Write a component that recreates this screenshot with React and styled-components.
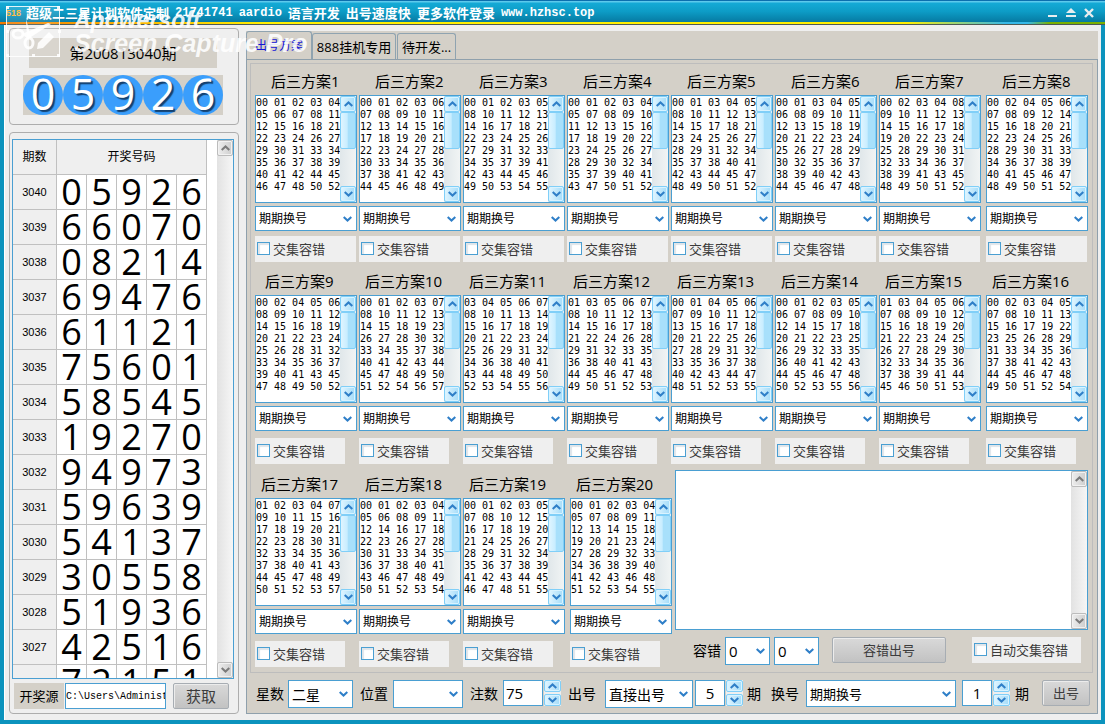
import React, {useState} from 'react';
import styled, { createGlobalStyle } from 'styled-components';

const GlobalStyle = createGlobalStyle`

    *{
        box-sizing:border-box;
    }
    body{
        margin:0;
        font-family:"Open Sans", "Noto Sans CJK SC", sans-serif;
        font-size:13px;
        color:#000;
        background:#efefef;
    }
    button, input, select, textarea{
        font-family:inherit;
        color:inherit;
        margin:0;
        padding:0;
        border-radius:0;
        outline:none;
    }
`;

const BLUE = "#4a9fd2";
const PANEL = "#d4d0c8";
const FACE = "#efefef";

//Whole window, the title bar sits on top of the framed body.
const Window = styled.div`

    position:relative;
    min-height:100vh;
    display:flex;
    flex-direction:column;
`;

const TitleBar = styled.header`

    display:flex;
    align-items:center;
    height:22px;
    padding:2px 10px 0 6px;
    color:white;
    border-top:1px solid #0b6fae;
    background:linear-gradient(#5cc9ec 0, #5cc9ec 1px, #14aad6 2px, #0d9cc6 50%, #067aa2 100%);
`;

const AppBadge = styled.span`

    width:20px;
    font:bold 9px "Liberation Sans", sans-serif;
    color:#ffb42e;
`;

const TitleText = styled.h1`

    flex:1;
    display:flex;
    gap:6px;
    margin:0;
    font-size:13px;
    line-height:18px;
    font-weight:bold;
    white-space:nowrap;
`;

const Latin = styled.span`

    font-family:"Liberation Mono", monospace;
    font-size:12px;
`;

const WindowButtons = styled.div`

    display:flex;
    gap:6px;
`;

const WindowButton = styled.button`

    display:flex;
    width:12px;
    height:12px;
    border:0;
    background:none;
`;

const Stripe = styled.div`

    height:3px;
    border-bottom:1px solid #4d5a55;
    background:linear-gradient(90deg, #f07800 0, #f8a000 8%, #ffee00 24%, #ffee00 82%, #35b8e8 91%, #35b8e8 93%, #7ab000 95%, #7ab000 100%);
`;

const Body = styled.main`

    flex:1;
    display:flex;
    gap:7px;
    padding:3px 3px 6px 5px;
    border:solid #0c93bd;
    border-width:0 4px 4px;
    box-shadow:inset 1px 0 0 #fff;
    background:${FACE};
`;

const Side = styled.aside`

    flex:0 0 230px;
    display:flex;
    flex-direction:column;
    gap:7px;
`;

const Group = styled.section`

    display:flex;
    flex-direction:column;
    border:1px solid #adadad;
    border-radius:4px;
`;

const LatestGroup = styled(Group)`

    align-items:center;
    gap:7px;
    padding:9px 2px 9px 0;
`;

const Issue = styled.div`

    width:188px;
    height:30px;
    line-height:30px;
    font-size:15px;
    text-align:center;
    background:${PANEL};
`;

const Balls = styled.div`

    display:flex;
    background:${PANEL};
`;

const Ball = styled.span`

    width:40px;
    height:40px;
    border-radius:50%;
    line-height:38px;
    font-size:43px;
    text-align:center;
    color:white;
    text-shadow:2px 2px 1px #14406e;
    background:#3a9efc;
`;

const HistoryGroup = styled(Group)`

    flex:1;
    gap:4px;
    padding:6px 4px 4px 2px;
`;

const HistoryBox = styled.div`

    flex:1 1 0;
    min-height:0;
    display:flex;
    justify-content:space-between;
    overflow:hidden;
    border:1px solid ${BLUE};
    background:white;
`;

const HistoryTable = styled.table`

    table-layout:fixed;
    width:194px;
    height:0;
    border-collapse:separate;
    border-spacing:0;

    th, td{
        height:35px;
        padding:0;
        text-align:center;
        font-weight:normal;
        border-right:1px solid #c0c0c0;
        border-bottom:1px solid #c0c0c0;
    }
    th{
        font-size:12px;
        line-height:16px;
        background:${FACE};
    }
    tbody th{
        font-family:"Liberation Sans", sans-serif;
        font-size:11px;
    }
    td{
        font-size:36px;
        line-height:34px;
    }
`;

const SourceRow = styled.div`

    display:flex;
    padding-left:2px;
`;

const SourceLabel = styled.label`

    width:50px;
    height:26px;
    margin-right:1px;
    line-height:26px;
    text-align:center;
    background:${PANEL};
`;

const TextInput = styled.input`

    width:${props => props.$width}px;
    height:26px;
    padding:0 ${props => props.$center ? 0 : 2}px;
    font-size:15px;
    text-align:${props => props.$center ? "center" : "left"};
    border:1px solid ${BLUE};
    background:white;
`;

const PathInput = styled(TextInput)`

    padding:0;
    font-family:"Liberation Mono", monospace;
    font-size:10px;
`;

const PushButton = styled.button`

    width:${props => props.$width}px;
    height:26px;
    margin-left:${props => props.$before}px;
    font-size:${props => props.$large ? 15 : 13}px;
    line-height:20px;
    color:#3c3c3c;
    border:1px solid #a7adb3;
    border-radius:2px;
    box-shadow:inset 1px 1px 0 #ececec;
    background:linear-gradient(#d9d9d9, #c2c2c2);
`;

//Right side, tab strip plus the page below it.
const Content = styled.section`

    flex:1;
    min-width:0;
    display:flex;
    flex-direction:column;
    margin-top:3px;
    background:${PANEL};
`;

const Tabs = styled.nav`

    display:flex;
    align-items:flex-end;
    height:28px;
`;

const Tab = styled.button`

    height:${props => props.$active ? 28 : 26}px;
    width:${props => props.$width}px;
    margin-right:${props => props.$active ? 0 : 1}px;
    font-size:${props => props.$active ? 12 : 13}px;
    line-height:20px;
    white-space:nowrap;
    color:${props => props.$active ? "#1414d8" : "#000"};
    border:1px solid #8fa3b0;
    border-bottom:0;
    border-radius:3px 3px 0 0;
    background:${PANEL};
`;

const Page = styled.div`

    flex:1;
    padding:3px 4px 5px 3px;
    border:1px solid #8fa0ac;
`;

const PlanFrame = styled.div`

    padding:7px 4px 5px;
    border:1px solid #bdbdbd;
`;

//The last column keeps a slightly wider gutter on its left.
const PlanGrid = styled.div`

    display:grid;
    grid-template-columns:repeat(${props => props.$columns - 1}, 104fr) 105fr;
    margin-bottom:${props => props.$after || 0}px;
`;

const PlanCell = styled.article`

    min-width:0;
    display:flex;
    flex-direction:column;
    padding-right:2px;

    &:last-child{
        padding:0 0 0 3px;
    }
`;

const PlanTitle = styled.h2`

    height:24px;
    margin:0;
    padding-left:${props => props.$indent}px;
    font-size:15px;
    line-height:20px;
    font-weight:normal;
    white-space:nowrap;
`;

const ListBox = styled.div`

    display:flex;
    height:${props => props.$height}px;
    border:1px solid ${BLUE};
    background:white;
`;

const NumberText = styled.textarea`

    flex:1;
    min-width:0;
    padding-top:1px;
    border:0;
    resize:none;
    overflow:hidden;
    white-space:pre;
    font-family:"DejaVu Sans Mono", monospace;
    font-size:10px;
    line-height:12px;
    background:white;
`;

const Bar = styled.div`

    flex:0 0 16px;
    display:flex;
    flex-direction:column;
    background:${props => props.$gray
        ? "linear-gradient(90deg, #e2e2e2, #f6f6f6)"
        : "linear-gradient(90deg, #e0e7ea, #f1f4f4)"};
`;

const BarButton = styled.button`

    flex:0 0 ${props => props.$height || 16}px;
    display:flex;
    align-items:center;
    justify-content:center;
    color:${props => props.$gray ? "#7b7b7b" : "#2f7fc8"};
    border:1px solid ${props => props.$gray ? "#bcbcbc" : "#80cff8"};
    border-radius:2px;
    box-shadow:inset 0 0 0 1px ${props => props.$gray ? "#f2f2f2" : "#d9f3ff"};
    background:${props => props.$gray
        ? "linear-gradient(90deg, #ededed, #cecece)"
        : "linear-gradient(90deg, #e0f5ff, #a4dcf9)"};
`;

const Thumb = styled.div`

    height:37px;
    border:1px solid #80cff8;
    border-radius:2px;
    background:linear-gradient(90deg, #e0f5ff 0, #c8edff 45%, #a8e0fb 50%, #a8e0fb 100%);
`;

const Track = styled.div`

    flex:1;
`;

const SelectBox = styled.span`

    flex:${props => props.$grow ? "1 1 150px" : "none"};
    display:grid;
    align-items:center;
    width:${props => props.$width ? props.$width + "px" : "auto"};
    height:${props => props.$height}px;
    margin-top:${props => props.$above || 0}px;
    margin-left:${props => props.$before || 0}px;
    border:1px solid ${BLUE};
    color:#2f7fc8;
    background:white;

    > *{
        grid-area:1 / 1;
    }
    > svg{
        justify-self:end;
        margin-right:4px;
        pointer-events:none;
    }
`;

const Select = styled.select`

    appearance:none;
    width:100%;
    height:100%;
    padding-left:3px;
    border:0;
    color:black;
    font-size:${props => props.$size}px;
    background:none;
`;

const CheckLabel = styled.label`

    display:flex;
    align-items:center;
    gap:3px;
    height:26px;
    width:${props => props.$width}px;
    margin-top:${props => props.$above || 0}px;
    margin-left:${props => props.$before || 0}px;
    padding:0 0 2px 2px;
    white-space:nowrap;
    color:#3a3a3a;
    background:${FACE};
`;

const CheckInput = styled.input`

    appearance:none;
    width:13px;
    height:13px;
    border:1px solid ${BLUE};
    box-shadow:inset 2px 2px 1px #dfe5ea;
    background:${props => props.checked ? BLUE : "white"};
`;

const Lower = styled.div`

    display:grid;
    grid-template-columns:417fr 413fr;
    gap:3px;

    > :first-child{
        padding-top:4px;
    }
`;

const OutputControls = styled.div`

    display:flex;
    margin-top:7px;
    padding-left:18px;
`;

const BottomBar = styled.div`

    display:flex;
    padding:7px 3px 0 6px;
`;

const FieldLabel = styled.label`

    flex:none;
    height:28px;
    margin-left:${props => props.$before || 0}px;
    margin-right:${props => props.$after || 5}px;
    font-size:14px;
    line-height:27px;
`;

const Gap = styled.span`

    flex:0 0 ${props => props.$size}px;
`;

const Stepper = styled.span`

    flex:none;
    display:flex;
    flex-direction:column;
    gap:2px;
    width:17px;
    height:26px;
    margin-left:1px;
    background:${FACE};
`;

//Lies over the corner of the window.
const Watermark = styled.div`

    position:absolute;
    top:6px;
    left:6px;
    display:flex;
    gap:12px;
    color:rgba(255,255,255,0.88);
    font-family:"Liberation Sans", sans-serif;
    font-weight:bold;
    font-style:italic;
    white-space:nowrap;
    pointer-events:none;
`;

const WatermarkText = styled.div`

    font-size:${props => props.$size}px;
    line-height:${props => props.$line}px;
`;

const Chevron = ({up}) => (
    <svg width="9" height="6" viewBox="0 0 9 6" fill="none" stroke="currentColor" strokeWidth="2">
        <path d={up ? "M0.7 5 L4.5 1.4 L8.3 5" : "M0.7 1 L4.5 4.6 L8.3 1"}/>
    </svg>
);

function ScrollBar({gray, thumb}){

    return (<Bar $gray={gray}>
        <BarButton $gray={gray} aria-label="向上"><Chevron up/></BarButton>
        {thumb && <Thumb/>}
        <Track/>
        <BarButton $gray={gray} aria-label="向下"><Chevron/></BarButton>
    </Bar>);
}

function DropDown({id, label, options, size = 14, height = 28, ...rest}){

    return (<SelectBox $height={height} {...rest}>
        <Select id={id} aria-label={label} $size={size}>
            {options.map(option => <option key={option}>{option}</option>)}
        </Select>
        <Chevron/>
    </SelectBox>);
}

function Check({children, ...rest}){

    const [checked, setChecked] = useState(false);

    return (<CheckLabel {...rest}>
        <CheckInput type="checkbox" checked={checked} onChange={() => setChecked(!checked)}/>
        {children}
    </CheckLabel>);
}

function NumberField({id, label, start, width, center}){

    const [value, setValue] = useState(start);

    return (<>
        <TextInput id={id} aria-label={label} $width={width} $center={center} value={value}
            onChange={e => setValue(Number(e.target.value) || 0)}/>
        <Stepper>
            <BarButton $height={12} aria-label="加" onClick={() => setValue(value + 1)}><Chevron up/></BarButton>
            <BarButton $height={12} aria-label="减" onClick={() => setValue(value - 1)}><Chevron/></BarButton>
        </Stepper>
    </>);
}

function Plan({number, rows, indent, checkGap, checkWidth}){

    const name = "后三方案" + number;

    return (<PlanCell>
        <PlanTitle $indent={number === 9 ? 10 : indent}>{name}</PlanTitle>
        <ListBox $height={108}>
            <NumberText aria-label={name} defaultValue={rows.join("\n")}/>
            <ScrollBar thumb/>
        </ListBox>
        <DropDown label={name + "换号"} options={["期期换号"]} size={12} height={25} $above={3}/>
        <Check $above={checkGap} $width={checkWidth}>交集容错</Check>
    </PlanCell>);
}

const history = [
    ["3040", "05926"], ["3039", "66070"], ["3038", "08214"], ["3037", "69476"],
    ["3036", "61121"], ["3035", "75601"], ["3034", "58545"], ["3033", "19270"],
    ["3032", "94973"], ["3031", "59639"], ["3030", "54137"], ["3029", "30558"],
    ["3028", "51936"], ["3027", "42516"], ["3026", "72151"],
];

const plans = [
    ["00 01 02 03 04", "05 06 07 08 11", "12 15 16 18 21", "22 23 24 26 27", "29 30 31 33 34", "35 36 37 38 39", "40 41 42 44 45", "46 47 48 50 52"],
    ["00 01 02 03 06", "07 08 09 10 11", "12 13 14 15 16", "17 18 19 20 21", "22 23 24 27 28", "30 33 34 35 36", "37 38 41 42 43", "44 45 46 48 49"],
    ["00 01 02 03 05", "08 10 11 12 13", "14 16 17 18 21", "22 23 24 25 26", "27 29 31 32 33", "34 35 37 39 41", "42 43 44 45 46", "49 50 53 54 55"],
    ["00 01 02 03 04", "05 07 08 09 10", "11 12 13 15 16", "17 18 19 20 22", "23 24 25 26 27", "28 29 30 32 34", "35 37 39 40 41", "43 47 50 51 52"],
    ["00 01 03 04 05", "08 10 11 12 13", "14 15 17 18 21", "23 24 25 26 27", "28 29 31 32 34", "35 37 38 40 41", "42 43 44 45 47", "48 49 50 51 52"],
    ["00 01 03 04 05", "06 08 09 10 11", "12 13 15 18 19", "20 21 22 23 24", "25 26 27 28 29", "30 32 35 36 37", "38 39 40 42 43", "44 45 46 47 48"],
    ["00 02 03 04 08", "09 10 11 12 13", "14 15 16 17 18", "19 20 22 23 24", "25 28 29 30 31", "32 33 34 36 37", "38 39 41 43 45", "48 49 50 51 52"],
    ["00 02 04 05 06", "07 08 09 12 14", "15 16 18 20 21", "22 23 24 25 26", "28 29 30 31 33", "34 36 37 38 39", "40 41 45 46 47", "48 49 50 51 52"],
    ["00 02 04 05 06", "08 09 10 11 12", "14 15 16 18 19", "20 21 22 23 24", "25 26 28 31 32", "33 34 35 36 37", "39 40 41 43 45", "47 48 49 50 52"],
    ["00 01 02 03 07", "08 10 11 12 13", "14 15 18 19 23", "26 27 28 30 32", "33 34 35 37 38", "40 41 42 43 44", "45 47 48 49 50", "51 52 54 56 57"],
    ["03 04 05 06 07", "08 10 11 13 14", "15 16 17 18 19", "20 21 22 23 24", "25 26 29 31 32", "34 36 38 40 41", "43 44 48 49 50", "52 53 54 55 56"],
    ["01 03 05 06 07", "08 10 11 12 13", "14 15 16 17 18", "21 22 24 26 28", "29 31 32 33 35", "36 38 40 41 43", "44 45 46 47 48", "49 50 51 52 53"],
    ["00 01 04 05 06", "07 09 10 11 12", "13 15 16 17 18", "20 21 22 25 26", "27 28 29 31 32", "33 35 36 37 38", "40 42 43 44 47", "48 51 52 53 55"],
    ["00 01 02 03 05", "06 07 08 09 10", "12 14 15 17 18", "20 21 22 23 25", "26 29 32 33 35", "36 40 41 42 43", "44 45 46 47 48", "50 52 53 55 56"],
    ["01 03 04 05 06", "07 08 09 10 12", "15 16 18 19 20", "21 22 23 24 25", "26 27 28 29 30", "32 33 34 35 36", "37 38 39 41 44", "45 46 50 51 53"],
    ["00 02 03 04 05", "07 08 10 11 13", "15 16 17 19 22", "23 25 26 28 29", "31 33 34 35 36", "37 38 41 42 43", "44 45 46 47 48", "49 50 51 52 54"],
    ["01 02 03 04 07", "09 10 11 15 16", "17 18 19 20 21", "22 23 28 30 31", "32 33 34 35 36", "37 38 40 41 43", "44 45 47 48 49", "50 51 52 53 57"],
    ["00 01 02 03 04", "05 06 08 09 11", "12 14 16 17 18", "22 23 26 27 28", "30 31 33 34 35", "36 37 38 40 41", "43 46 47 48 49", "50 51 52 53 54"],
    ["00 01 02 03 05", "07 08 10 12 15", "16 17 18 19 20", "21 24 25 26 27", "28 29 31 32 34", "35 36 37 38 39", "41 42 43 44 45", "46 47 48 51 55"],
    ["00 01 02 03 04", "05 07 08 09 11", "12 13 14 15 18", "19 20 21 23 24", "27 28 29 32 33", "34 36 38 39 40", "41 42 43 46 48", "51 52 53 54 55"],
];

//from is zero based, the plan numbers on screen start at 1
function renderPlans(from, to, look){

    return plans.slice(from, to).map((rows, i) =>
        <Plan key={from + i} number={from + i + 1} rows={rows} {...look}/>);
}

const wide = {indent: 16, checkGap: 5, checkWidth: 101};
const narrow = {indent: 6, checkGap: 7, checkWidth: 90};

function LatestDraw(){

    return (<LatestGroup>
        <Issue>第200813040期</Issue>
        <Balls>
            {"05926".split("").map((digit, i) => <Ball key={i}>{digit}</Ball>)}
        </Balls>
    </LatestGroup>);
}

function History(){

    return (<HistoryGroup>
        <HistoryBox>
            <HistoryTable>
                <colgroup>
                    <col width="44"/>
                    <col span="5" width="30"/>
                </colgroup>
                <thead>
                    <tr><th>期数</th><th colSpan="5">开奖号码</th></tr>
                </thead>
                <tbody>
                    {history.map(([issue, digits]) => <tr key={issue}>
                        <th>{issue}</th>
                        {digits.split("").map((digit, i) => <td key={i}>{digit}</td>)}
                    </tr>)}
                </tbody>
            </HistoryTable>
            <ScrollBar gray/>
        </HistoryBox>
        <SourceRow>
            <SourceLabel htmlFor="source">开奖源</SourceLabel>
            <PathInput id="source" $width={101} defaultValue="C:\Users\Administrator"/>
            <PushButton $width={56} $before={7} $large>获取</PushButton>
        </SourceRow>
    </HistoryGroup>);
}

export default function App(){

    return (<>
        <GlobalStyle/>
        <Window>
            <TitleBar>
                <AppBadge>518</AppBadge>
                <TitleText>
                    <span>超级二三星计划软件定制</span>
                    <Latin>21741741</Latin>
                    <Latin>aardio</Latin>
                    <span>语言开发</span>
                    <span>出号速度快</span>
                    <span>更多软件登录</span>
                    <Latin>www.hzhsc.top</Latin>
                </TitleText>
                <WindowButtons>
                    <WindowButton aria-label="最小化">
                        <svg width="12" height="12" fill="#e8eef0"><rect x="1" y="8" width="9" height="2"/></svg>
                    </WindowButton>
                    <WindowButton aria-label="最大化">
                        <svg width="12" height="12" fill="#e8eef0"><path d="M6 1 L11 6 H1 Z"/><rect x="1" y="8" width="10" height="2"/></svg>
                    </WindowButton>
                    <WindowButton aria-label="关闭">
                        <svg width="12" height="12" stroke="#e8eef0" strokeWidth="2.4"><path d="M2 2 L10 10 M10 2 L2 10"/></svg>
                    </WindowButton>
                </WindowButtons>
            </TitleBar>
            <Stripe/>

            <Body>
                <Side>
                    <LatestDraw/>
                    <History/>
                </Side>

                <Content>
                    <Tabs>
                        <Tab $active $width={66}>出号方案</Tab>
                        <Tab $width={84}>888挂机专用</Tab>
                        <Tab $width={59}>待开发...</Tab>
                    </Tabs>
                    <Page>
                        <PlanFrame>
                            <PlanGrid $columns={8} $after={9}>{renderPlans(0, 8, wide)}</PlanGrid>
                            <PlanGrid $columns={8} $after={6}>{renderPlans(8, 16, narrow)}</PlanGrid>
                            <Lower>
                                <PlanGrid $columns={4}>{renderPlans(16, 20, narrow)}</PlanGrid>
                                <div>
                                    <ListBox $height={160}>
                                        <NumberText aria-label="容错结果"/>
                                        <ScrollBar gray/>
                                    </ListBox>
                                    <OutputControls>
                                        <FieldLabel htmlFor="fault-min" $after={4}>容错</FieldLabel>
                                        <DropDown id="fault-min" options={["0"]} size={15} $width={45}/>
                                        <DropDown label="容错上限" options={["0"]} size={15} $width={45} $before={4}/>
                                        <PushButton $width={114} $before={13}>容错出号</PushButton>
                                        <Check $width={109} $before={26}>自动交集容错</Check>
                                    </OutputControls>
                                </div>
                            </Lower>
                        </PlanFrame>

                        <BottomBar>
                            <FieldLabel htmlFor="stars" $after={4}>星数</FieldLabel>
                            <DropDown id="stars" options={["二星"]} $width={65}/>
                            <FieldLabel htmlFor="place" $before={7}>位置</FieldLabel>
                            <DropDown id="place" options={[""]} $width={70}/>
                            <FieldLabel htmlFor="bets" $before={7}>注数</FieldLabel>
                            <NumberField id="bets" start={75} width={40}/>
                            <FieldLabel htmlFor="mode" $before={7} $after={9}>出号</FieldLabel>
                            <DropDown id="mode" options={["直接出号"]} $width={88}/>
                            <Gap $size={2}/>
                            <NumberField label="出号期数" start={5} width={30} center/>
                            <FieldLabel as="span" $before={4}>期</FieldLabel>
                            <FieldLabel htmlFor="change" $before={5} $after={7}>换号</FieldLabel>
                            <DropDown id="change" options={["期期换号"]} size={13} height={27} $grow/>
                            <Gap $size={6}/>
                            <NumberField label="换号期数" start={1} width={30} center/>
                            <FieldLabel as="span" $before={5}>期</FieldLabel>
                            <PushButton $width={48} $before={8}>出号</PushButton>
                        </BottomBar>
                    </Page>
                </Content>
            </Body>

            <Watermark>
                <svg width="56" height="52" viewBox="0 0 56 52" fill="none" stroke="currentColor">
                    <rect x="0.5" y="0.5" width="53" height="50" fill="rgba(255,255,255,0.12)"/>
                    <g fill="currentColor" stroke="none">
                        <rect x="0" y="0" width="3" height="3"/><rect x="26" y="0" width="3" height="3"/><rect x="51" y="0" width="3" height="3"/>
                        <rect x="0" y="24" width="3" height="3"/><rect x="52" y="24" width="3" height="3"/>
                        <rect x="0" y="48" width="3" height="3"/><rect x="26" y="48" width="3" height="3"/><rect x="51" y="48" width="3" height="3"/>
                        <path d="M32 37 L43 26 L48 31 L37 42 L31 43 Z"/>
                        <path d="M20 13 L25 31 L21 33 Z"/>
                        <path d="M16 28 L42 17 L45 18 L22 33 Z"/>
                    </g>
                    <ellipse cx="12" cy="28" rx="5" ry="4" strokeWidth="3"/>
                    <ellipse cx="23" cy="37" rx="4" ry="5" strokeWidth="3"/>
                </svg>
                <div>
                    <WatermarkText $size={23} $line={28}>Apowersoft</WatermarkText>
                    <WatermarkText $size={25} $line={18}>Screen Capture Pro</WatermarkText>
                </div>
            </Watermark>
        </Window>
    </>);
}
